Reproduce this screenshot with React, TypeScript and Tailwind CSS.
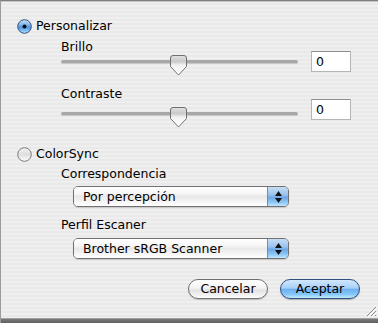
import React from "react";

function RadioOn() {
  return (
    <svg width="15" height="15" viewBox="0 0 15 15" className="shrink-0">
      <defs>
        <linearGradient id="rOn" x1="0" y1="0" x2="0" y2="1">
          <stop offset="0" stopColor="#cfe4fa" />
          <stop offset="0.45" stopColor="#6fa9e8" />
          <stop offset="0.55" stopColor="#4b91df" />
          <stop offset="1" stopColor="#b2e4ff" />
        </linearGradient>
      </defs>
      <circle cx="7.5" cy="7.5" r="6.8" fill="url(#rOn)" stroke="#34527c" strokeWidth="1" />
      <circle cx="7.5" cy="7.5" r="2" fill="#0a0a0a" />
    </svg>
  );
}

function RadioOff() {
  return (
    <svg width="15" height="15" viewBox="0 0 15 15" className="shrink-0">
      <defs>
        <linearGradient id="rOff" x1="0" y1="0" x2="0" y2="1">
          <stop offset="0" stopColor="#f4f4f4" />
          <stop offset="0.5" stopColor="#dedede" />
          <stop offset="1" stopColor="#ffffff" />
        </linearGradient>
      </defs>
      <circle cx="7.5" cy="7.5" r="6.8" fill="url(#rOff)" stroke="#7a7a7a" strokeWidth="1" />
    </svg>
  );
}

function Thumb() {
  return (
    <svg width="17" height="21" viewBox="0 0 17 21">
      <defs>
        <linearGradient id="th" x1="0" y1="0" x2="0" y2="1">
          <stop offset="0" stopColor="#e2e2e2" />
          <stop offset="0.3" stopColor="#c9c9c9" />
          <stop offset="0.5" stopColor="#f2f2f2" />
          <stop offset="1" stopColor="#ffffff" />
        </linearGradient>
      </defs>
      <path
        d="M3 0.5 H14 Q16.5 0.5 16.5 3 V11.5 L8.5 20 L0.5 11.5 V3 Q0.5 0.5 3 0.5 Z"
        fill="url(#th)"
        stroke="#707070"
        strokeWidth="1"
      />
    </svg>
  );
}

function Slider({ trackPt, thumbTop }: { trackPt: string; thumbTop: string }) {
  return (
    <div className={`relative ${trackPt}`}>
      <div className="h-[4px] rounded-full bg-[#a8a8a8] border-b border-b-[#c8c8c8]" />
      <div className={`absolute left-[109px] ${thumbTop}`}>
        <Thumb />
      </div>
    </div>
  );
}

function NumBox() {
  return (
    <div className="ml-[13px] w-[40px] h-[21px] bg-white border border-[#b5b5b5] border-t-[#8e8e8e] flex items-center pl-[4px] leading-[19px]">
      0
    </div>
  );
}

function Popup({ text }: { text: string }) {
  return (
    <div className="ml-[72px] w-[216px] h-[21px] flex rounded-[5px] border border-[#707070] overflow-hidden shadow-[0_1px_1px_rgba(0,0,0,0.15)]">
      <div className="flex-1 pl-[9px] leading-[19px] bg-[linear-gradient(180deg,#ffffff_0%,#f6f6f6_35%,#e8e8e8_50%,#f4f4f4_75%,#ffffff_100%)]">
        {text}
      </div>
      <div className="w-[21px] border-l border-l-[#6d8fb8] flex flex-col items-center justify-center gap-[2px] bg-[linear-gradient(180deg,#c6def5_0%,#9cc3ec_40%,#6ea8e6_55%,#8cc6f5_80%,#bfe6ff_100%)]">
        <svg width="7" height="5" viewBox="0 0 7 5">
          <path d="M3.5 0 L7 5 H0 Z" fill="#111" />
        </svg>
        <svg width="7" height="5" viewBox="0 0 7 5">
          <path d="M0 0 H7 L3.5 5 Z" fill="#111" />
        </svg>
      </div>
    </div>
  );
}

export default function App() {
  return (
    <div className="relative w-[378px] h-[323px] overflow-hidden flex flex-col border-t border-t-[#7e7e7e] border-l border-l-[#9c9c9c] bg-[repeating-linear-gradient(180deg,#efefef_0px,#efefef_2px,#e9e9e9_2px,#e9e9e9_4px)] font-['DejaVu_Sans',sans-serif] text-[12.5px] text-black">
      <div className="h-px bg-[#c6c6c6]" />

      {/* Personalizar */}
      <div className="mt-[16px] pl-[16px] h-[16px] flex items-center gap-[4px] leading-[16px]">
        <RadioOn />
        <span>Personalizar</span>
      </div>

      {/* Brillo */}
      <div className="mt-[6px] flex items-end">
        <div className="ml-[60px] w-[237px] flex flex-col">
          <div className="leading-[14px]">Brillo</div>
          <Slider trackPt="h-[18px] pt-[6px]" thumbTop="top-[1px]" />
        </div>
        <NumBox />
      </div>

      {/* Contraste */}
      <div className="mt-[15px] flex items-end">
        <div className="ml-[60px] w-[237px] flex flex-col">
          <div className="leading-[14px]">Contraste</div>
          <Slider trackPt="h-[19px] pt-[11px]" thumbTop="top-[6px]" />
        </div>
        <NumBox />
      </div>

      {/* ColorSync */}
      <div className="mt-[26px] pl-[16px] h-[16px] flex items-center gap-[4px] leading-[16px]">
        <RadioOff />
        <span>ColorSync</span>
      </div>

      <div className="mt-[5px] ml-[60px] leading-[14px]">Correspondencia</div>
      <div className="mt-[5px]">
        <Popup text="Por percepción" />
      </div>

      <div className="mt-[11px] ml-[60px] leading-[14px]">Perfil Escaner</div>
      <div className="mt-[6px]">
        <Popup text="Brother sRGB Scanner" />
      </div>

      {/* Buttons */}
      <div className="mt-[20px] flex justify-end gap-[12px] pr-[18px]">
        <button className="w-[80px] h-[20px] rounded-full border border-[#6f6f6f] leading-[18px] text-center bg-[linear-gradient(180deg,#ffffff_0%,#f3f3f3_45%,#e2e2e2_55%,#f2f2f2_85%,#ffffff_100%)] shadow-[0_1px_1px_rgba(0,0,0,0.2)]">
          Cancelar
        </button>
        <button className="w-[80px] h-[20px] rounded-full border border-[#2f4f80] leading-[18px] text-center bg-[linear-gradient(180deg,#d2e8fd_0%,#a7cff7_45%,#6cb0f1_52%,#86c8fb_80%,#c0ecff_100%)] shadow-[0_1px_1px_rgba(0,0,0,0.25)]">
          Aceptar
        </button>
      </div>

      {/* bottom frame */}
      <div className="mt-auto h-[5px] border-t border-t-[#a0a0a0] bg-[linear-gradient(180deg,#7a7a7a,#5e5e5e)]" />

      {/* resize grip */}
      <svg
        className="absolute right-[1px] bottom-[6px]"
        width="12"
        height="12"
        viewBox="0 0 12 12"
      >
        <path d="M11 2 L2 11 M11 6 L6 11 M11 10 L10 11" stroke="#8a8a8a" strokeWidth="1" />
        <path d="M12 3 L3 12 M12 7 L7 12" stroke="#ffffff" strokeWidth="1" />
      </svg>
    </div>
  );
}
